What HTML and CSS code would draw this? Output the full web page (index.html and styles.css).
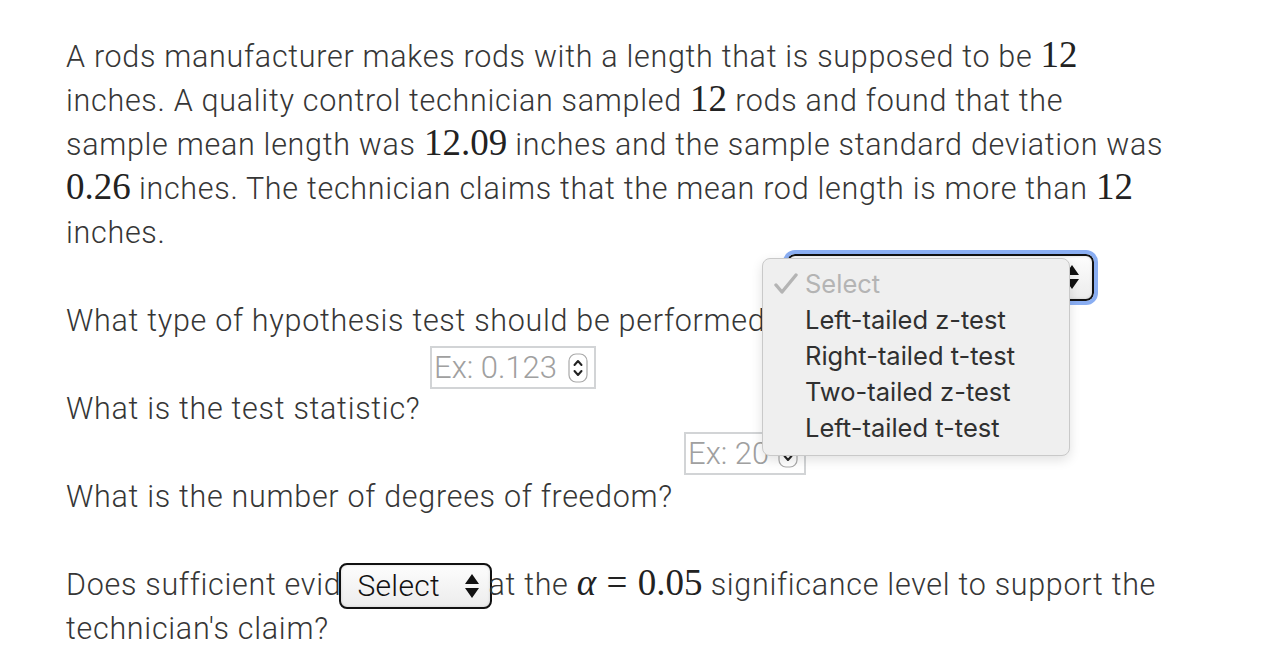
FILE: index.html
```html
<!DOCTYPE html>
<html lang="en">
  <head>
    <meta charset="UTF-8" />
    <title>Hypothesis test</title>
    <link rel="stylesheet" href="styles.css">
  </head>
  <body>
    <div class="page">
      <p class="intro">
        A rods manufacturer makes rods with a length that is supposed to be <span class="m">12</span><br>
        inches. A quality control technician sampled <span class="m">12</span> rods and found that the<br>
        sample mean length was <span class="m">12.09</span> inches and the sample standard deviation was<br>
        <span class="m">0.26</span> inches. The technician claims that the mean rod length is more than <span class="m">12</span><br>
        inches.
      </p>

      <div class="q">
        <div class="slot slot-type">
          <span class="sel sel-focus">
            <span class="sel-text">Select</span>
            <svg class="arrows" width="14" height="24" viewBox="0 0 14 24"><path d="M7 0 L14 10 L0 10 Z M0 14 L14 14 L7 24 Z" fill="#111"/></svg>
          </span>
          <div class="menu">
            <div class="opt opt-on">
              <svg class="tick" width="24" height="22" viewBox="0 0 24 22"><path d="M2 12 L8 19 L22 2" fill="none" stroke="#b4b4b4" stroke-width="3.4" stroke-linecap="round" stroke-linejoin="round"/></svg>
              Select
            </div>
            <div class="opt">Left-tailed z-test</div>
            <div class="opt">Right-tailed t-test</div>
            <div class="opt">Two-tailed z-test</div>
            <div class="opt">Left-tailed t-test</div>
          </div>
        </div>
        <p class="line">What type of hypothesis test should be performed?</p>
      </div>

      <div class="q">
        <div class="slot slot-stat">
          <span class="num num-wide">
            <input type="text" placeholder="Ex: 0.123">
            <svg class="spin" width="20" height="30" viewBox="0 0 20 30"><rect x="1" y="1" width="18" height="28" rx="7" fill="#fff" stroke="#a9a9a9" stroke-width="1.2"/><path d="M6.5 12 L10 8 L13.5 12 M6.5 18 L10 22 L13.5 18" fill="none" stroke="#222" stroke-width="2" stroke-linecap="round" stroke-linejoin="round"/></svg>
          </span>
        </div>
        <p class="line">What is the test statistic?</p>
      </div>

      <div class="q">
        <div class="slot slot-df">
          <span class="num num-small">
            <input type="text" placeholder="Ex: 20">
            <svg class="spin" width="20" height="30" viewBox="0 0 20 30"><rect x="1" y="1" width="18" height="28" rx="7" fill="#fff" stroke="#a9a9a9" stroke-width="1.2"/><path d="M6.5 12 L10 8 L13.5 12 M6.5 18 L10 22 L13.5 18" fill="none" stroke="#222" stroke-width="2" stroke-linecap="round" stroke-linejoin="round"/></svg>
          </span>
        </div>
        <p class="line">What is the number of degrees of freedom?</p>
      </div>

      <div class="q q-last">
        <p class="line">Does sufficient evid<span class="sel sel-small"><span class="sel-text">Select</span><svg class="arrows" width="14" height="24" viewBox="0 0 14 24"><path d="M7 0 L14 10 L0 10 Z M0 14 L14 14 L7 24 Z" fill="#111"/></svg></span>at the <span class="m"><i>α</i><span class="eq">=</span>0.05</span> significance level to support the<br>
        technician's claim?</p>
      </div>
    </div>
  </body>
</html>
```

FILE: styles.css
```css
* {
  margin: 0;
  padding: 0;
  box-sizing: border-box;
}
body {
  background: #fff;
  font-family: Roboto, "Liberation Sans", sans-serif;
  color: #363636;
}
.page {
  padding: 35px 0 0 66px;
  width: 1262px;
  height: 652px;
  overflow: hidden;
}
.intro,
.line {
  font-size: 30.5px;
  font-weight: 300;
  letter-spacing: 0.7px;
  line-height: 44px;
  white-space: nowrap;
}
.m {
  font-family: "Liberation Serif", serif;
  font-size: 37px;
  font-weight: 400;
  letter-spacing: 0;
  line-height: 0;
  color: #222;
}
.m i {
  font-style: italic;
}
.eq {
  padding: 0 0.28em;
}

/* control rows sit on the blank line above each question */
.slot {
  height: 44px;
  display: flex;
  align-items: center;
  position: relative;
}
.slot-type {
  padding-left: 721px;
}
.slot-stat {
  padding-left: 364px;
  padding-top: 5px;
}
.slot-df {
  padding-left: 618px;
}
.q-last {
  padding-top: 44px;
}

.sel {
  display: inline-flex;
  align-items: center;
  justify-content: space-between;
  border: 2px solid #111;
  border-radius: 8px;
  background: linear-gradient(#fdfdfd, #ececec);
  box-shadow: inset 0 0 3px rgba(0, 0, 0, 0.15);
  color: #111;
  font-size: 30px;
  font-weight: 300;
  letter-spacing: 0.3px;
}
.sel-focus {
  width: 307px;
  height: 47px;
  padding: 0 13px 0 16px;
  outline: 4px solid #8aaef2;
  outline-offset: 0;
  border-radius: 8px;
}
.sel-small {
  width: 153px;
  height: 46px;
  padding: 0 11px 0 16px;
  vertical-align: middle;
  margin: -4px -4px -2px -2px;
  line-height: 1;
}
.arrows {
  display: block;
}

.menu {
  position: absolute;
  left: 696px;
  top: 3px;
  width: 308px;
  padding: 7px 0 9px;
  background: #efefef;
  border: 1px solid #c9c9c9;
  border-radius: 8px;
  box-shadow: 0 4px 12px rgba(0, 0, 0, 0.12);
  font-family: Inter, "Liberation Sans", sans-serif;
  font-size: 25.5px;
  font-weight: 400;
  letter-spacing: 0;
  color: #303030;
  z-index: 2;
}
.opt {
  height: 36px;
  line-height: 36px;
  padding-left: 42px;
  position: relative;
  white-space: nowrap;
}
.opt-on {
  color: #b4b4b4;
}
.tick {
  position: absolute;
  left: 11px;
  top: 7px;
}

.num {
  display: inline-flex;
  align-items: center;
  height: 43px;
  border: 2px solid #d2d4d6;
  background: #fff;
}
.num input {
  border: none;
  outline: none;
  background: transparent;
  font-family: Roboto, "Liberation Sans", sans-serif;
  font-size: 31px;
  font-weight: 300;
  padding-left: 2px;
  width: 100%;
  min-width: 0;
}
.num input::placeholder {
  color: #a0a0a0;
}
.num .spin {
  flex: none;
  margin-right: 6px;
}
.num-wide {
  width: 166px;
}
.num-small {
  width: 122px;
}
```
